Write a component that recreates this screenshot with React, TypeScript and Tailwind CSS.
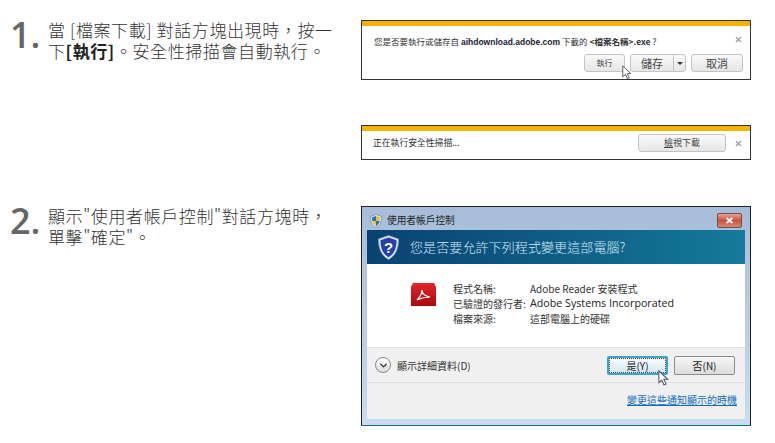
import React from 'react';
import { ChevronDown } from 'lucide-react';

const cjk = "font-['Noto_Sans_CJK_TC','Noto_Sans_CJK_SC',sans-serif]";

// Arrow pointer that sits over the buttons
function Cursor({ className, width, height }: { className: string; width: number; height: number }) {
  return (
    <svg className={`absolute ${className}`} width={width} height={height} viewBox="0 0 13 19">
      <path d="M1 1 L1 15 L4.5 12 L7 17.5 L9.5 16.5 L7 11 L11.5 11 Z" fill="#fff" stroke="#4a5460" strokeWidth="1.2" />
    </svg>
  );
}

function CloseMark() {
  return (
    <svg width="7" height="7" viewBox="0 0 7 7">
      <path d="M1 1 L6 6 M6 1 L1 6" stroke="#a8a8a8" strokeWidth="1.6" />
    </svg>
  );
}

function Step({ num, children }: { num: string; children: React.ReactNode }) {
  return (
    <div className="flex w-[361px] shrink-0 pl-[10px]">
      <div className="w-[38px] shrink-0 text-[36px] leading-[40px] font-semibold font-['Open_Sans',sans-serif] text-[#666] mt-[-5px]">
        {num}.
      </div>
      <div className="w-[295px] mt-[-1px] text-[17px] font-light leading-[21px] tracking-[0.6px] whitespace-nowrap text-[#333]">{children}</div>
    </div>
  );
}

function GreyButton({ children, className }: { children: React.ReactNode; className: string }) {
  return (
    <div className={`flex items-center justify-center h-[18px] rounded-[3px] border border-[#c4c4c4] bg-gradient-to-b from-[#fafafa] to-[#e6e6e6] text-[#444] ${className}`}>
      {children}
    </div>
  );
}

function DownloadBars() {
  return (
    <div className="flex flex-col gap-[45px] w-[390px]">
      <div className="relative h-[60px] border border-[#333] bg-white">
        <div className="h-[5px] bg-[#f5b400]" />
        <div className="flex justify-between pl-[12px] pr-[8px] pt-[9px]">
          <div className="text-[8.5px] leading-[12px] text-[#333]">
            您是否要執行或儲存自 <b className="font-['Liberation_Sans',sans-serif] text-[#223]">aihdownload.adobe.com</b> 下載的 <b>&lt;檔案名稱&gt;.exe</b> ?
          </div>
          <div className="pt-[1px]"><CloseMark /></div>
        </div>
        <div className="flex justify-end gap-[5px] pr-[7px] pt-[6px]">
          <GreyButton className="w-[41px] text-[8px]">執行</GreyButton>
          <div className="flex h-[18px] w-[56px] rounded-[3px] border border-[#c4c4c4] bg-gradient-to-b from-[#fafafa] to-[#e6e6e6] text-[#444]">
            <div className="flex-1 flex items-center justify-center text-[11px] border-r border-[#c4c4c4]">儲存</div>
            <div className="w-[11px] flex items-center justify-center">
              <div className="border-x-[3px] border-t-[3px] border-x-transparent border-t-[#333]" />
            </div>
          </div>
          <GreyButton className="w-[52px] text-[11px]">取消</GreyButton>
        </div>
        <Cursor className="left-[260px] top-[44px]" width={10} height={15} />
      </div>
      <div className="h-[35px] border border-[#333] bg-white">
        <div className="h-[5px] bg-[#f5b400]" />
        <div className="flex items-center pl-[11px] pr-[8px] pt-[3px]">
          <div className="flex-1 text-[8.8px] leading-[12px] text-[#333]">正在執行安全性掃描...</div>
          <GreyButton className="w-[88px] mr-[9px] text-[9px]"><span><u>檢</u>視下載</span></GreyButton>
          <CloseMark />
        </div>
      </div>
    </div>
  );
}

function UacDialog() {
  return (
    <div className="relative w-[390px] h-[220px] border border-[#222] border-b-[#0e6b7e] bg-gradient-to-b from-[#a6bcd8] to-[#c9dcf0] px-[5px] pb-[6px] flex flex-col">
      {/* title bar */}
      <div className="h-[23px] shrink-0 flex items-center -mx-[5px] pl-[8px] pr-[8px] pt-[4px]">
        <svg width="12" height="14" viewBox="0 0 12 14" className="mr-[5px]">
          <path d="M6 0.5 L11.5 2.5 C11.5 8 10 11.5 6 13.5 C2 11.5 0.5 8 0.5 2.5 Z" fill="#e8eef5" stroke="#5c7290" strokeWidth="0.6" />
          <path d="M6 2 L10 3.2 C10 5 10 6 9.6 7 L6 7 Z" fill="#f2c230" />
          <path d="M6 7 L2.4 7 C3 9.5 4 11 6 12 Z" fill="#f2c230" />
          <path d="M6 2 L2 3.2 C2 5 2 6 2.4 7 L6 7 Z" fill="#2f6fc0" />
          <path d="M6 7 L9.6 7 C9 9.5 8 11 6 12 Z" fill="#2f6fc0" />
        </svg>
        <span className="flex-1 text-[9.7px] text-[#222]">使用者帳戶控制</span>
        <div className="flex items-center justify-center w-[25px] h-[15px] rounded-[2px] border border-[#7d4a40] bg-gradient-to-b from-[#e0a397] via-[#c8523c] to-[#d18a78]">
          <svg width="9" height="7" viewBox="0 0 9 7">
            <path d="M1.5 1 L7.5 6 M7.5 1 L1.5 6" stroke="#fff" strokeWidth="1.8" />
          </svg>
        </div>
      </div>
      {/* blue header */}
      <div className="h-[34px] shrink-0 flex items-center pl-[11px] bg-gradient-to-r from-[#0a4272] to-[#157a9c]">
        <svg width="21" height="25" viewBox="0 0 21 25" className="mr-[11px]">
          <path d="M10.5 0.5 L20.5 4 C20.5 14 17.5 20.5 10.5 24.5 C3.5 20.5 0.5 14 0.5 4 Z" fill="#dfe7f4" stroke="#8fa5c4" strokeWidth="0.7" />
          <path d="M10.5 2.5 L18.5 5.2 C18.5 13.5 16 18.8 10.5 22.2 C5 18.8 2.5 13.5 2.5 5.2 Z" fill="#2540a8" />
          <text x="10.5" y="17.5" textAnchor="middle" fontSize="15" fontWeight="700" fill="#fff" fontFamily="Liberation Sans, sans-serif">?</text>
        </svg>
        <span className="text-[13px] font-light tracking-[0.1px] text-[#d6e7f0]">您是否要允許下列程式變更這部電腦?</span>
      </div>
      {/* details */}
      <div className="h-[83px] shrink-0 bg-white flex pl-[43px] pt-[17px]">
        <svg width="27" height="25" viewBox="0 0 27 25" className="mt-[1px] mr-[16px]">
          <defs>
            <linearGradient id="pdf" x1="0" y1="0" x2="0" y2="1">
              <stop offset="0" stopColor="#e2262a" />
              <stop offset="1" stopColor="#a80a0e" />
            </linearGradient>
          </defs>
          <path d="M3 1 H24 L26 5 V24 H1 V5 Z" fill="url(#pdf)" />
          <path d="M7 18 C10 15 12 11 12 8 C12 11 14 14 20 15 C15 15 11 16 7 18 Z" fill="none" stroke="#fff" strokeWidth="1.2" />
        </svg>
        <div className="text-[10px] leading-[15px] text-[#333]">
          <div className="flex"><span className="w-[77px]">程式名稱:</span><span>Adobe Reader 安裝程式</span></div>
          <div className="flex"><span className="w-[77px]">已驗證的發行者:</span><span className="text-[10.7px] font-['Open_Sans',sans-serif] text-[#222]">Adobe Systems Incorporated</span></div>
          <div className="flex"><span className="w-[77px]">檔案來源:</span><span>這部電腦上的硬碟</span></div>
        </div>
      </div>
      {/* actions */}
      <div className="flex-1 bg-[#f0f0f0] flex flex-col">
        <div className="h-[36px] shrink-0 flex items-center border-t border-b border-[#dfdfdf] pl-[8px] pr-[10px]">
          <div className="flex items-center justify-center w-[16px] h-[16px] rounded-full border border-[#8a8a8a] bg-gradient-to-b from-white to-[#dcdcdc] mr-[6px]">
            <ChevronDown size={11} strokeWidth={3} className="text-[#333]" />
          </div>
          <span className="flex-1 text-[10px] text-[#333]">顯示詳細資料(D)</span>
          <div className="w-[61px] h-[19px] mr-[6px] rounded-[2px] border-2 border-[#3fa3cc] bg-gradient-to-b from-[#fafdff] to-[#d2e6f2] text-[10px] text-[#222]">
            <div className="h-full flex items-center justify-center border border-dotted border-[#444]">是(Y)</div>
          </div>
          <div className="flex items-center justify-center w-[61px] h-[19px] rounded-[2px] border border-[#8a8a8a] bg-gradient-to-b from-[#f7f7f7] to-[#dcdcdc] text-[10px] text-[#222]">否(N)</div>
        </div>
        <div className="flex justify-end pr-[8px] pt-[10px] text-[10px] leading-[14px] text-[#0f6cbd] underline">變更這些通知顯示的時機</div>
      </div>
      <Cursor className="left-[296px] top-[163px]" width={11} height={16} />
    </div>
  );
}

export default function App() {
  return (
    <div lang="zh-TW" className={`w-[775px] h-[443px] overflow-hidden bg-white pt-[20px] ${cjk}`}>
      <div className="flex h-[186px]">
        <Step num="1">
          當 [檔案下載] 對話方塊出現時，按一<br />
          下<b className="font-bold text-[#222]">[執行]</b>。安全性掃描會自動執行。
        </Step>
        <DownloadBars />
      </div>
      <div className="flex">
        <Step num="2">
          顯示"使用者帳戶控制"對話方塊時，<br />
          單擊"確定"。
        </Step>
        <UacDialog />
      </div>
    </div>
  );
}
